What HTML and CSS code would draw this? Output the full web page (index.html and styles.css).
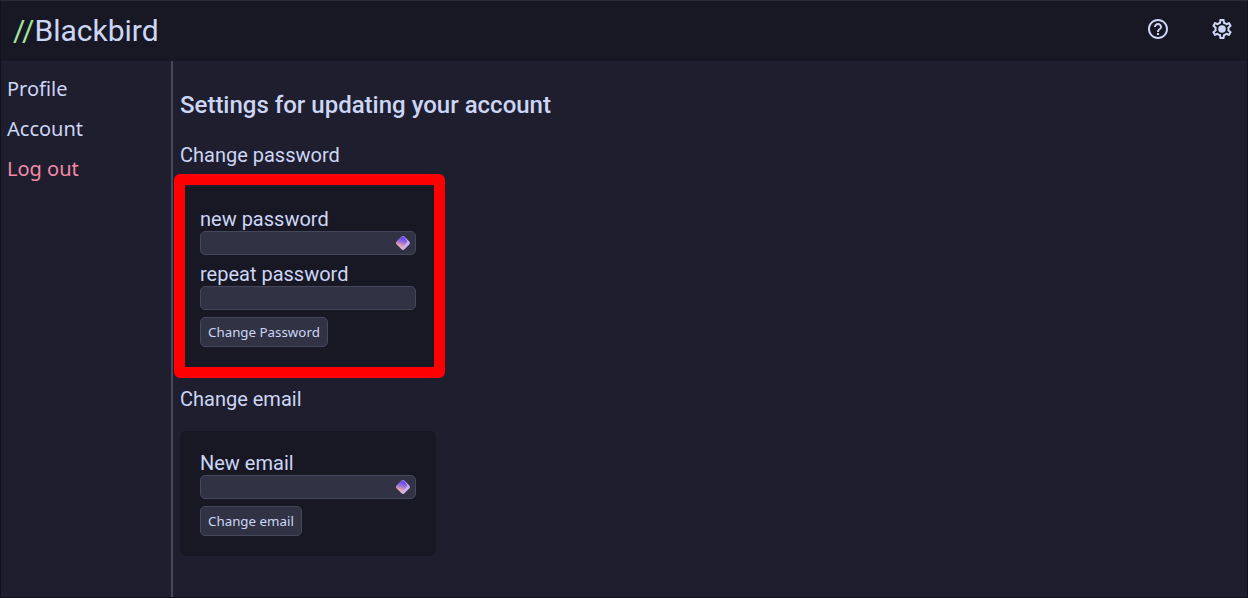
FILE: index.html
```html
<!DOCTYPE html>
<html lang="en">
<head>
<meta charset="utf-8">
<title>Blackbird – Account settings</title>
<link rel="stylesheet" href="styles.css">
</head>
<body>
<svg class="defs" aria-hidden="true">
  <defs>
    <linearGradient id="gem-base" x1="1" y1="0" x2="0" y2="1">
      <stop offset="0.3" stop-color="#c9aef5"/>
      <stop offset="1" stop-color="#efb0a8"/>
    </linearGradient>
    <linearGradient id="gem-top" x1="0.6" y1="0" x2="0.3" y2="1">
      <stop offset="0.2" stop-color="#6d4aee"/>
      <stop offset="0.55" stop-color="#9b74dc"/>
      <stop offset="0.9" stop-color="#e9a6a6"/>
    </linearGradient>
    <symbol id="gem" viewBox="0 0 14 14">
      <rect x="1.500" y="1.500" width="11" height="11" rx="2.500" transform="rotate(45 7 7)" fill="url(#gem-base)"/>
      <path d="M5.600.8Q7-.3 8.300.9L11 4.800Q11.600 5.800 10.900 6.600L7.400 10.500Q6.600 11.300 5.600 10.700L1 8.300Q-.2 7 .9 5.600Z" fill="url(#gem-top)"/>
    </symbol>
  </defs>
</svg>
<header class="topbar">
  <a class="brand" href="#"><span class="brand-slashes">//</span>Blackbird</a>
  <div class="actions">
    <button class="icon-button" type="button" aria-label="Help">
      <svg viewBox="0 0 24 24"><path d="M11 18h2v-2h-2v2zm1-16C6.480 2 2 6.480 2 12s4.480 10 10 10 10-4.480 10-10S17.520 2 12 2zm0 18c-4.410 0-8-3.590-8-8s3.590-8 8-8 8 3.590 8 8-3.590 8-8 8zm0-14c-2.210 0-4 1.790-4 4h2c0-1.100.9-2 2-2s2 .9 2 2c0 2-3 1.750-3 5h2c0-2.250 3-2.500 3-5 0-2.210-1.790-4-4-4z"/></svg>
    </button>
    <button class="icon-button" type="button" aria-label="Settings">
      <svg viewBox="0 0 24 24"><path d="M19.430 12.980c.04-.32.07-.64.07-.98s-.03-.66-.07-.98l2.110-1.650c.19-.15.24-.42.12-.64l-2-3.460c-.09-.16-.26-.25-.44-.25-.06 0-.12.010-.17.030l-2.490 1c-.52-.4-1.080-.73-1.690-.98l-.38-2.650C14.460 2.180 14.250 2 14 2h-4c-.25 0-.46.18-.49.42l-.38 2.650c-.61.25-1.170.59-1.690.98l-2.490-1c-.06-.02-.12-.03-.18-.03-.17 0-.34.09-.43.25l-2 3.460c-.13.22-.07.49.12.64l2.110 1.650c-.04.32-.07.65-.07.98s.03.66.07.98l-2.110 1.650c-.19.15-.24.42-.12.64l2 3.460c.09.16.26.25.44.25.06 0 .12-.01.17-.03l2.490-1c.52.4 1.080.73 1.690.98l.38 2.650c.03.24.24.42.49.42h4c.25 0 .46-.18.49-.42l.38-2.650c.61-.25 1.170-.59 1.690-.98l2.490 1c.06.02.12.03.18.03.17 0 .34-.09.43-.25l2-3.460c.12-.22.07-.49-.12-.64l-2.110-1.650zm-1.980-1.710c.04.31.05.52.05.73 0 .21-.02.43-.05.73l-.14 1.130.89.7 1.080.84-.7 1.210-1.270-.51-1.040-.42-.9.68c-.43.32-.84.56-1.250.73l-1.060.43-.16 1.130-.2 1.350h-1.400l-.19-1.350-.16-1.130-1.060-.43c-.43-.18-.83-.41-1.230-.71l-.91-.7-1.060.43-1.270.51-.7-1.210 1.080-.84.89-.7-.14-1.130c-.03-.31-.05-.54-.05-.74s.02-.43.05-.73l.14-1.130-.89-.7-1.080-.84.7-1.210 1.270.51 1.040.42.9-.68c.43-.32.84-.56 1.250-.73l1.060-.43.16-1.130.2-1.350h1.390l.19 1.350.16 1.130 1.060.43c.43.18.83.41 1.230.71l.91.7 1.060-.43 1.270-.51.7 1.210-1.070.85-.89.7.14 1.130z"/><circle cx="12" cy="12" r="3.800"/></svg>
    </button>
  </div>
</header>
<div class="layout">
  <nav class="sidebar">
    <a href="#">Profile</a>
    <a href="#">Account</a>
    <a class="logout" href="#">Log out</a>
  </nav>
  <main class="content">
    <h1>Settings for updating your account</h1>
    <h2>Change password</h2>
    <form class="card highlighted">
      <label for="new-password">new password</label>
      <div class="field">
        <input id="new-password" type="password">
        <svg class="gem"><use href="#gem"/></svg>
      </div>
      <label for="repeat-password">repeat password</label>
      <div class="field">
        <input id="repeat-password" type="password">
      </div>
      <button class="submit" type="button">Change Password</button>
    </form>
    <h2>Change email</h2>
    <form class="card">
      <label for="new-email">New email</label>
      <div class="field">
        <input id="new-email" type="email">
        <svg class="gem"><use href="#gem"/></svg>
      </div>
      <button class="submit" type="button">Change email</button>
    </form>
  </main>
</div>
</body>
</html>
```
FILE: styles.css
```css
:root {
  --base: #1e1e2e;
  --mantle: #181825;
  --surface: #313244;
  --outline: #45475a;
  --text: #cdd6f4;
  --green: #a6e3a1;
  --red: #f38ba8;
}

* {
  box-sizing: border-box;
}

body {
  display: flex;
  flex-direction: column;
  min-height: 100vh;
  margin: 0;
  border: 1px solid #11111b;
  border-top-color: #2c2c38;
  background: var(--base);
  color: var(--text);
  font-family: Roboto, "Liberation Sans", sans-serif;
  font-size: 20px;
  line-height: 24px;
}

.defs {
  position: absolute;
  width: 0;
  height: 0;
}

.topbar {
  display: flex;
  align-items: center;
  justify-content: space-between;
  height: 60px;
  padding: 0 13px 0 12px;
  background: var(--mantle);
}

.brand {
  color: var(--text);
  font-size: 30px;
  line-height: 36px;
  text-decoration: none;
}

.brand-slashes {
  color: var(--green);
}

.actions {
  display: flex;
  gap: 40px;
  padding-bottom: 5px;
}

.icon-button {
  display: flex;
  padding: 0;
  border: 0;
  background: none;
}

.icon-button svg {
  width: 24px;
  height: 24px;
  fill: var(--text);
}

.layout {
  display: flex;
  flex: 1;
}

.sidebar {
  display: flex;
  flex-direction: column;
  gap: 12px;
  width: 172px;
  padding: 14px 6px;
  border-right: 2px solid var(--outline);
  font-family: "Noto Sans", sans-serif;
  line-height: 28px;
}

.sidebar a {
  color: var(--text);
  text-decoration: none;
}

.sidebar .logout {
  color: var(--red);
}

.content {
  flex: 1;
  padding: 30px 7px;
}

h1 {
  margin: 0 0 24px;
  font-size: 24px;
  font-weight: 500;
  line-height: 28px;
}

h2 {
  margin: 20px 0;
  font-size: 20px;
  font-weight: 400;
}

.card {
  position: relative;
  width: 256px;
  padding: 20px;
  border-radius: 6px;
  background: var(--mantle);
}

.highlighted::after {
  content: "";
  position: absolute;
  inset: -13px -9px -11px -6px;
  border: 11px solid #ff0000;
  border-radius: 6px;
  pointer-events: none;
}

label {
  display: block;
}

.field {
  position: relative;
  margin-bottom: 7px;
}

.field input {
  display: block;
  width: 100%;
  height: 24px;
  padding: 0 28px 0 6px;
  border: 1px solid var(--outline);
  border-radius: 5px;
  background: var(--surface);
  color: var(--text);
}

.gem {
  position: absolute;
  top: 5px;
  right: 6px;
  width: 14px;
  height: 14px;
}

.submit {
  display: block;
  height: 30px;
  padding: 0 7px;
  border: 1px solid var(--outline);
  border-radius: 5px;
  background: var(--surface);
  color: var(--text);
  font-family: "Noto Sans", sans-serif;
}
```
